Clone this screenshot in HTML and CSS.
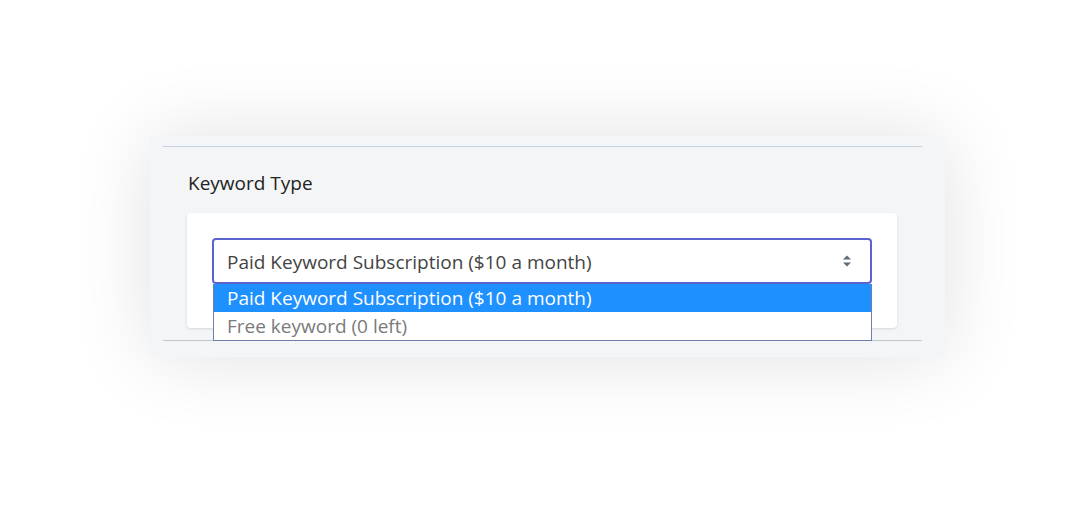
FILE: index.html
```html
<!DOCTYPE html>
<html>
<head>
<meta charset="utf-8">
<link rel="stylesheet" href="styles.css">
</head>
<body>
<div class="stage">
  <div class="panel">
    <div class="section">
      <div class="title">Keyword Type</div>
      <div class="card">
        <div class="select-wrap">
          <div class="select">
            <span class="value">Paid Keyword Subscription ($10 a month)</span>
            <svg class="arrows" width="10" height="16" viewBox="0 0 10 16">
              <path d="M1 6.5 L5 2.5 L9 6.5 Z" fill="#5f6b7a"/>
              <path d="M1 9.5 L5 13.5 L9 9.5 Z" fill="#5f6b7a"/>
            </svg>
          </div>
          <div class="menu">
            <div class="option selected">Paid Keyword Subscription ($10 a month)</div>
            <div class="option">Free keyword (0 left)</div>
          </div>
        </div>
      </div>
    </div>
  </div>
</div>
</body>
</html>
```
FILE: styles.css
```css
html, body {
  margin: 0;
  padding: 0;
  background: #ffffff;
}
body {
  font-family: "Open Sans", "Noto Sans", "Liberation Sans", sans-serif;
  width: 1086px;
  height: 515px;
  overflow: hidden;
}
.stage {
  padding-top: 136px;
  padding-left: 150px;
}
.panel {
  width: 795px;
  height: 221px;
  box-sizing: border-box;
  background: #f4f5f7;
  box-shadow: 0 0 80px rgba(0, 0, 0, 0.12);
  padding: 10px 23px 0 13px;
}
.section {
  border-top: 1px solid #c3d3e2;
  border-bottom: 1px solid #c2c8d0;
  padding: 23px 25px 12px 24px;
}
.title {
  font-size: 19px;
  line-height: 27px;
  color: #222222;
  margin-bottom: 16px;
  padding-left: 1px;
}
.card {
  background: #ffffff;
  border-radius: 4px;
  box-shadow: 0 1px 3px rgba(0, 0, 0, 0.12);
  height: 115px;
  box-sizing: border-box;
  padding: 25px 25px;
}
.select-wrap {
  position: relative;
}
.select {
  height: 46px;
  box-sizing: border-box;
  border: 2px solid #5b63cf;
  border-radius: 4px;
  display: flex;
  align-items: center;
  justify-content: space-between;
  padding: 2px 18px 0 13px;
}
.value {
  font-size: 19px;
  color: #444444;
}
.arrows {
  display: block;
  margin-top: -2px;
}
.menu {
  position: absolute;
  top: 46px;
  left: 1px;
  width: 659px;
  box-sizing: border-box;
  border: 1px solid #6f7fa8;
  border-top: none;
  background: #ffffff;
}
.option {
  height: 28px;
  line-height: 28px;
  font-size: 19px;
  color: #7a7a7a;
  padding-left: 13px;
}
.option.selected {
  background: #1e90ff;
  color: #ffffff;
}
```
